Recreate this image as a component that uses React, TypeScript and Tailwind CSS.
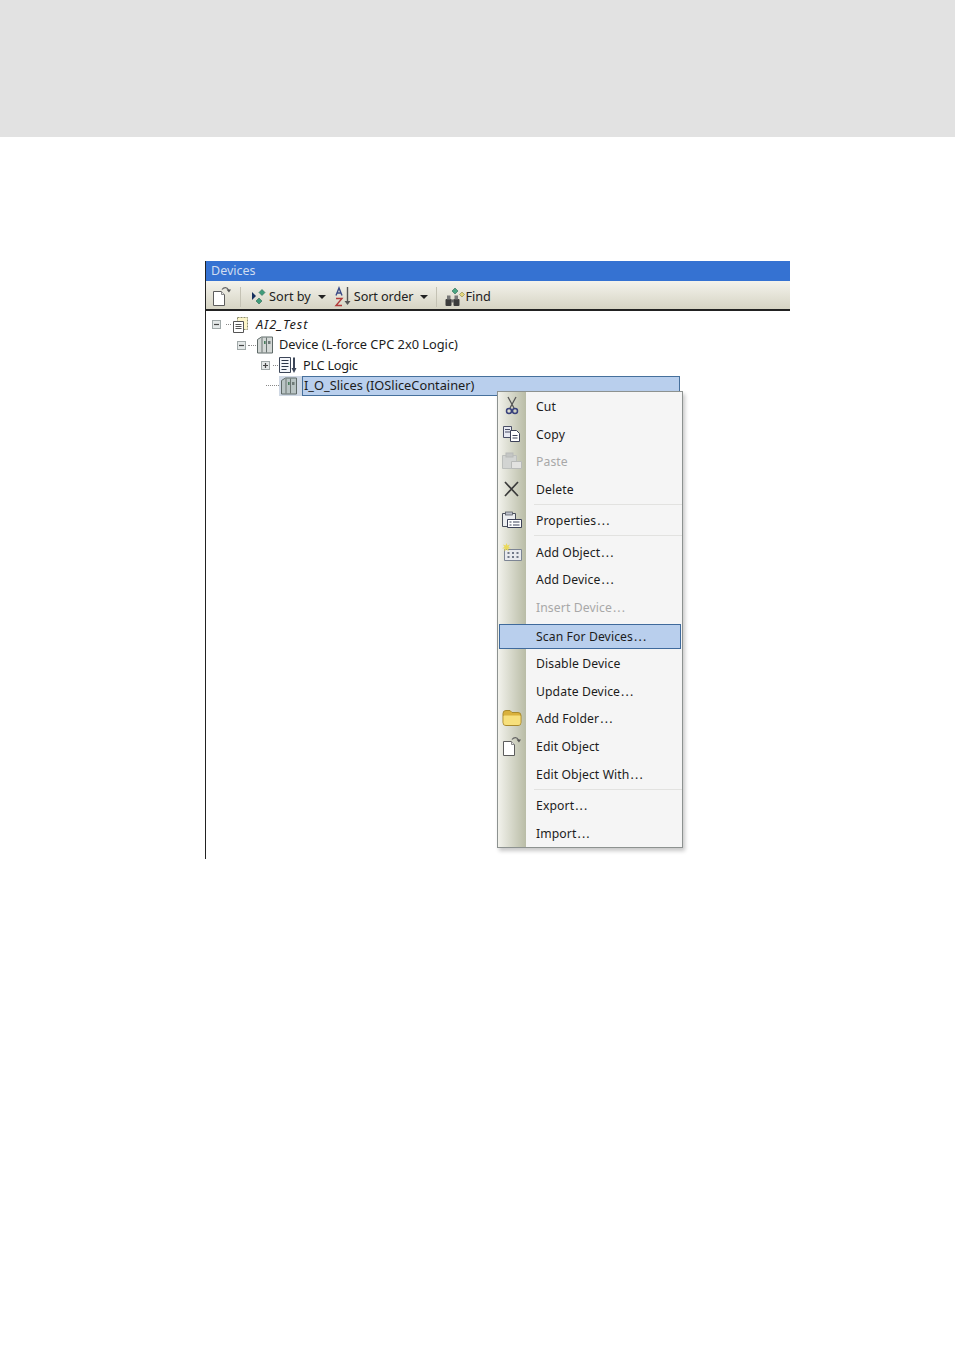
const font = { fontFamily: '"Noto Sans", Tahoma, sans-serif' };

function EditIcon({ className }: { className?: string }) {
  return (
    <svg viewBox="0 0 20 20" className={className}>
      <path d="M1.500 5.500h8l3 3v11h-11z" fill="#fff" stroke="#5c5c5c" />
      <path d="M9.500 5.500v3h3" fill="#e8e8e8" stroke="#8a8a8a" />
      <path d="M10 3.500c2-2.500 5-2.500 6.500.5" fill="none" stroke="#666" strokeWidth="1.200" />
      <path d="M14.500 3.500h4.500l-2 3z" fill="#555" />
    </svg>
  );
}

function DeviceIcon({ dim }: { dim?: boolean }) {
  return (
    <svg viewBox="0 0 18 18" className="h-[18px] w-[18px] shrink-0">
      <path d="M1.500 3.500l4-2.500h11v16h-15z" fill={dim ? "#b9c4c4" : "#d4d8d6"} stroke="#5f6a68" />
      <path d="M6 1.500v15M10.500 1.500v15" stroke="#6a7472" />
      <rect x="8" y="5" width="1.600" height="3" fill="#4b7d5e" />
      <rect x="12" y="5" width="2.500" height="3" fill="#6f7b78" />
    </svg>
  );
}

function DocIcon() {
  return (
    <svg viewBox="0 0 18 18" className="h-[18px] w-[18px] shrink-0">
      <path d="M6.500 1.500h10v12h-10z" fill="#fdf6c8" stroke="#8e8e6e" strokeDasharray="2 1" />
      <path d="M2.500 5.500h10v11h-10z" fill="#fff" stroke="#555" />
      <path d="M4.500 8.500h6M4.500 10.500h6M4.500 12.500h6" stroke="#555" />
    </svg>
  );
}

function PlcIcon() {
  return (
    <svg viewBox="0 0 20 18" className="h-[18px] w-5 shrink-0">
      <path d="M1.500 1.500h11v15h-11z" fill="#f4f6fa" stroke="#3c4658" />
      <path d="M3.500 4.500h7M3.500 7.500h7M3.500 10.500h7M3.500 13.500h5" stroke="#2b3548" />
      <path d="M16 1.500v12" stroke="#3c4658" strokeWidth="2" />
      <path d="M13.500 12h5l-2.500 5z" fill="#3c4658" />
    </svg>
  );
}

function Expander({ minus }: { minus?: boolean }) {
  return (
    <span className="flex h-[9px] w-[9px] shrink-0 items-center justify-center border border-[#a0a8a8] bg-[#e4e8e8]">
      <svg viewBox="0 0 7 7" className="h-[7px] w-[7px]">
        <path d={minus ? "M1 3.500h5" : "M1 3.500h5M3.500 1v5"} stroke="#444" strokeWidth="1.200" />
      </svg>
    </span>
  );
}

function SortByIcon() {
  return (
    <svg viewBox="0 0 16 16" className="h-4 w-4">
      <path d="M1 3l4 4-4 4z" fill="#16305e" />
      <path d="M11 0.500l3 3-3 3-3-3z" fill="#3f9c7a" stroke="#2d6a55" strokeWidth=".6" />
      <path d="M8 9l3 3-3 3-3-3z" fill="#3f9c7a" stroke="#2d6a55" strokeWidth=".6" />
    </svg>
  );
}

function SortOrderIcon() {
  return (
    <svg viewBox="0 0 18 22" className="h-[22px] w-[18px]">
      <path d="M2 9.500L5 2l3 7.500M3.200 7h3.600" fill="none" stroke="#3a4a86" strokeWidth="1.400" />
      <path d="M2 12.500h6l-6 7h6" fill="none" stroke="#b23a3a" strokeWidth="1.400" />
      <path d="M13.500 1v15" stroke="#555" strokeWidth="1.400" />
      <path d="M10.500 15h6l-3 4z" fill="#555" />
    </svg>
  );
}

function FindIcon() {
  return (
    <svg viewBox="0 0 21 20" className="h-5 w-[21px]">
      <path d="M11 1l3 3-3 3-3-3z" fill="#4aa582" stroke="#2d6a55" strokeWidth=".6" />
      <path d="M18 5l2.500 2.500L18 10l-2.500-2.500z" fill="#e2d77c" stroke="#8a8446" strokeWidth=".6" />
      <rect x="1.500" y="12" width="6" height="7" rx="1" fill="#3c3c3c" />
      <rect x="9.500" y="12" width="6" height="7" rx="1" fill="#3c3c3c" />
      <rect x="3" y="8.500" width="3.500" height="4" fill="#777" />
      <rect x="10.500" y="8.500" width="3.500" height="4" fill="#777" />
      <rect x="7" y="12.500" width="3" height="3" fill="#666" />
    </svg>
  );
}

function Caret() {
  return <span className="block h-0 w-0 border-x-4 border-t-4 border-x-transparent border-t-[#222]" />;
}

const menuIcons: Record<string, React.ReactNode> = {
  Cut: (
    <svg viewBox="0 0 16 20" className="h-5 w-4">
      <path d="M4 1l6 11M12 1L6 12" stroke="#555" strokeWidth="1.300" fill="none" />
      <circle cx="5" cy="15" r="2.500" fill="none" stroke="#38417c" strokeWidth="1.500" />
      <circle cx="11" cy="15" r="2.500" fill="none" stroke="#38417c" strokeWidth="1.500" />
    </svg>
  ),
  Copy: (
    <svg viewBox="0 0 20 18" className="h-[18px] w-5">
      <path d="M1.500 1.500h8v11h-8z" fill="#e8eaf2" stroke="#4a4f66" />
      <path d="M3 4.500h5M3 7h5" stroke="#4a4f66" />
      <path d="M8.500 5.500h6l3 3v8h-9z" fill="#fff" stroke="#3d4258" />
      <path d="M10.500 10.500h5M10.500 13h5" stroke="#3d4258" />
    </svg>
  ),
  Paste: (
    <svg viewBox="0 0 22 18" className="h-[18px] w-[22px]">
      <path d="M1.500 3.500h14v13h-14z" fill="#d2d4d2" stroke="#bcbfbc" />
      <rect x="5" y="1" width="7" height="4" fill="#c4c6c4" stroke="#b8bab8" />
      <path d="M10.500 9.500h10v7h-10z" fill="#e2e2e0" stroke="#b8bab8" />
    </svg>
  ),
  Delete: (
    <svg viewBox="0 0 18 18" className="h-[18px] w-[18px]">
      <path d="M2 2l13 14M15 2L2 16" stroke="#3a3a3a" strokeWidth="1.700" />
    </svg>
  ),
  "Properties...": (
    <svg viewBox="0 0 22 18" className="h-[18px] w-[22px]">
      <path d="M1.500 2.500h13v13h-13z" fill="#eceef0" stroke="#4a4f5a" />
      <rect x="4.500" y="1" width="7" height="3" fill="#bfc4cc" stroke="#4a4f5a" strokeWidth=".7" />
      <path d="M6.500 8.500h14v8h-14z" fill="#fff" stroke="#3d4258" />
      <path d="M8.500 11h2M12 11h6.500M8.500 14h2M12 14h6.500" stroke="#3d4258" />
    </svg>
  ),
  "Add Object...": (
    <svg viewBox="0 0 22 20" className="h-5 w-[22px]">
      <path d="M3.500 7.500h17v11h-17z" fill="#e8eaee" stroke="#7d8594" />
      <path d="M6.500 11h2M11 11h2M15.500 11h2M6.500 15h2M11 15h2M15.500 15h2" stroke="#4a5468" strokeWidth="1.400" />
      <path d="M5.500 1l.9 2.600L9 2.500 7.400 5 10 6.300l-2.800.3.300 2.800L5.500 7.300 3.500 9.400l.3-2.800L1 6.300 3.600 5 2 2.500l2.600 1.100z" fill="#ead95a" />
    </svg>
  ),
  "Add Folder...": (
    <svg viewBox="0 0 20 16" className="h-4 w-5">
      <path d="M1 3.500q0-3 3-3h4l2 2h6q3 0 3 3v7q0 3-3 3H4q-3 0-3-3z" fill="#d9b13c" stroke="#a98a2c" />
      <path d="M1.500 6.500q0-1 1-1h15q1 0 1 1v6q0 2.500-2.500 2.500H4q-2.500 0-2.500-2.500z" fill="#f7e07c" />
    </svg>
  ),
  "Edit Object": <EditIcon className="h-5 w-5" />,
};

const menuGroups: { label: string; disabled?: boolean; active?: boolean }[][] = [
  [{ label: "Cut" }, { label: "Copy" }, { label: "Paste", disabled: true }, { label: "Delete" }],
  [{ label: "Properties..." }],
  [
    { label: "Add Object..." },
    { label: "Add Device..." },
    { label: "Insert Device...", disabled: true },
    { label: "Scan For Devices...", active: true },
    { label: "Disable Device" },
    { label: "Update Device..." },
    { label: "Add Folder..." },
    { label: "Edit Object" },
    { label: "Edit Object With..." },
  ],
  [{ label: "Export..." }, { label: "Import..." }],
];

function ContextMenu() {
  return (
    <div className="absolute left-[291px] top-[130px] flex w-[186px] flex-col border border-[#8d9290] bg-[#f5f5f5] shadow-[2px_3px_4px_rgba(0,0,0,0.22)]">
      {menuGroups.map((group, i) => (
        <div key={i}>
          {i > 0 ? (
            <div className="flex h-[3.400px]">
              <div className="w-[28px] bg-gradient-to-r from-[#f2f2ec] to-[#b9bca6]" />
              <div className="ml-[8px] mt-px h-px flex-1 bg-[#e2e2e0]" />
            </div>
          ) : null}
          {group.map((item) => (
            <div key={item.label} className="relative flex h-[27.800px] items-center">
              <div className="flex h-full w-[28px] shrink-0 items-center justify-center bg-gradient-to-r from-[#f2f2ec] to-[#b9bca6]">
                {menuIcons[item.label]}
              </div>
              {item.active ? (
                <div className="absolute inset-x-px bottom-0 top-[3px] border border-[#3f6a9c] bg-[#b9cfed]" />
              ) : null}
              <span
                className={`relative ml-[10px] text-[12.200px] tracking-[0.1px] ${item.active ? "pt-[4px]" : "pt-[2px]"} ${item.disabled ? "text-[#a8a8a8]" : "text-[#1c1c1c]"}`}
              >
                {item.label.replace("...", "")}
                {item.label.endsWith("...") ? <span className="ml-[1px] tracking-[1.200px]">...</span> : null}
              </span>
            </div>
          ))}
        </div>
      ))}
    </div>
  );
}

export default function App() {
  return (
    <div className="h-[1350px] w-[955px] bg-white" style={font}>
      <div className="h-[137px] bg-[#e2e2e2]" />
      <div className="relative ml-[205px] mt-[124px] h-[598px] w-[585px] border-l border-[#222]">
        <div className="flex h-[20px] items-center bg-[#3572d2] pl-[5px] text-[12.500px] text-[#cfdcf0]">Devices</div>
        <div className="flex h-[30px] items-center border-b-2 border-[#222] bg-gradient-to-b from-[#f4f3ec] to-[#d6d4c4] pt-[3px] text-[12.700px] text-[#222]">
          <EditIcon className="ml-[6px] h-5 w-5 -translate-y-[1px]" />
          <div className="ml-[8px] h-[20px] w-px bg-[#c4c2b4]" />
          <div className="ml-[10px]"><SortByIcon /></div>
          <span className="ml-[2px]">Sort by</span>
          <div className="ml-[7px]"><Caret /></div>
          <div className="ml-[8px]"><SortOrderIcon /></div>
          <span className="ml-[2px] tracking-[-0.1px]">Sort order</span>
          <div className="ml-[7px]"><Caret /></div>
          <div className="ml-[8px] h-[20px] w-px bg-[#c4c2b4]" />
          <div className="ml-[7px]"><FindIcon /></div>
          <span>Find</span>
        </div>
        <div className="flex flex-col pt-[3.500px] text-[12.800px] text-[#1c1c1c]">
          <div className="flex h-[20.400px] items-center pl-[6px]">
            <Expander minus />
            <span className="ml-[5px] w-[5px] border-t border-dotted border-[#888]" />
            <DocIcon />
            <span className="ml-[7px] italic tracking-[0.9px]">AI2_Test</span>
          </div>
          <div className="flex h-[20.400px] items-center pl-[31px]">
            <Expander minus />
            <span className="ml-[2px] w-[8px] border-t border-dotted border-[#888]" />
            <DeviceIcon />
            <span className="ml-[5px]">Device (L-force CPC 2x0 Logic)</span>
          </div>
          <div className="flex h-[20.400px] items-center pl-[55px]">
            <Expander />
            <span className="ml-[3px] w-[5px] border-t border-dotted border-[#888]" />
            <PlcIcon />
            <span className="ml-[5px] tracking-[-0.3px]">PLC Logic</span>
          </div>
          <div className="flex h-[20.400px] items-center pl-[60px]">
            <span className="w-[13px] border-t border-dotted border-[#888]" />
            <div className="flex h-full items-center bg-[#cfd8e4] pl-[1px] pr-[4px]"><DeviceIcon dim /></div>
            <div className="flex h-full w-[378px] items-center border border-[#46709c] bg-[#b9cfed] pl-px">I_O_Slices (IOSliceContainer)</div>
          </div>
        </div>
        <ContextMenu />
      </div>
    </div>
  );
}
